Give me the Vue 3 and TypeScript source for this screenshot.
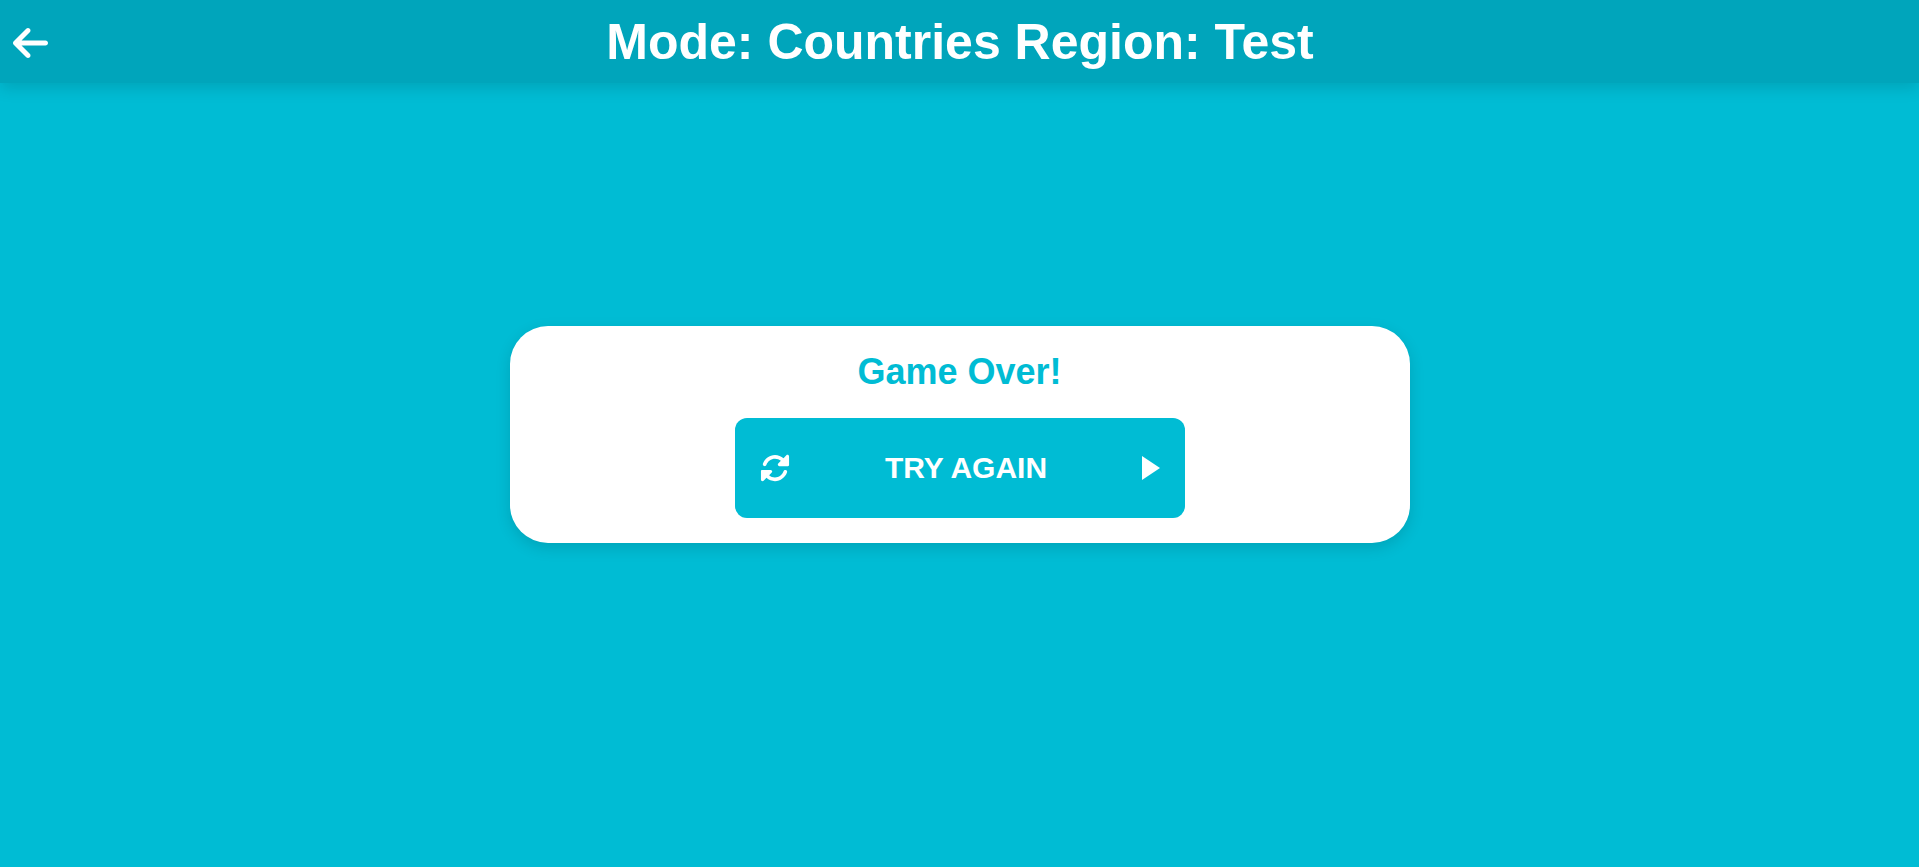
<script setup lang="ts">
import { ref } from 'vue'

const mode = ref<string>('Countries')
const region = ref<string>('Test')
</script>

<template>
  <div class="page">
    <header class="topbar">
      <button class="back" type="button" aria-label="Back">
        <svg viewBox="0 0 448 512" aria-hidden="true">
          <path d="M9.4 233.4c-12.5 12.5-12.5 32.8 0 45.3l160 160c12.5 12.5 32.8 12.5 45.3 0s12.5-32.8 0-45.3L109.2 288H416c17.7 0 32-14.3 32-32s-14.3-32-32-32H109.3L214.6 118.6c12.5-12.5 12.5-32.8 0-45.3s-32.8-12.5-45.3 0l-160 160z" />
        </svg>
      </button>
      <h1 class="title">Mode: {{ mode }} Region: {{ region }}</h1>
    </header>

    <main class="stage">
      <section class="card">
        <h2 class="message">Game Over!</h2>
        <button class="retry" type="button">
          <svg class="rotate" viewBox="0 0 512 512" aria-hidden="true">
            <path d="M449.9 39.96l-48.5 48.53C362.5 53.19 311.4 32 256 32C161.5 32 78.59 92.34 49.58 182.2c-5.438 16.81 3.797 34.88 20.61 40.28c16.97 5.5 34.86-3.812 40.3-20.59C130.9 138.5 189.4 96 256 96c37.96 0 73 14.18 100.2 37.8L311.1 178C295.1 194.8 306.8 223.4 330.4 224h146.9C487.7 223.7 496 215.3 496 204.9V59.04C496 34.99 466.9 22.95 449.9 39.96zM441.8 289.6c-16.94-5.438-34.88 3.812-40.3 20.59C381.1 373.5 322.6 416 256 416c-37.96 0-73-14.18-100.2-37.8L200 334C216.9 317.2 205.2 288.6 181.6 288H34.66C24.32 288.3 16 296.7 16 307.1v145.9c0 24.04 29.07 36.08 46.07 19.07l48.5-48.53C149.5 458.8 200.6 480 255.1 480c94.45 0 177.4-60.34 206.4-150.2C467.9 313 458.6 294.9 441.8 289.6z" />
          </svg>
          <span>TRY AGAIN</span>
          <svg class="play" viewBox="0 0 18 24" aria-hidden="true">
            <path d="M0 0L18 12L0 24z" />
          </svg>
        </button>
      </section>
    </main>
  </div>
</template>

<style>
body {
  margin: 0;
  background: #00bcd4;
}
</style>

<style scoped>
.page {
  min-height: 100vh;
  box-sizing: border-box;
  display: grid;
  font-family: "Liberation Sans", Arial, sans-serif;
  background: #00bcd4;
}

.topbar {
  position: fixed;
  top: 0;
  left: 0;
  right: 0;
  display: grid;
  grid-template-columns: 35px 1fr 35px;
  align-items: center;
  padding: 14px 12px 12px 13px;
  background: #00a5bb;
  box-shadow: 0 5px 15px rgba(0, 0, 0, 0.13);
}

.back {
  display: flex;
  padding: 0;
  border: 0;
  background: none;
  cursor: pointer;
}

.back svg {
  width: 35px;
  height: 40px;
}

svg {
  fill: #fff;
}

.title {
  margin: 0;
  color: #fff;
  font-size: 50px;
  line-height: 57px;
  text-align: center;
}

.stage {
  display: grid;
  place-items: center;
  padding-top: 2px;
}

.card {
  box-sizing: border-box;
  width: 900px;
  max-width: 100%;
  padding: 25px;
  display: flex;
  flex-direction: column;
  align-items: center;
  gap: 25px;
  border-radius: 38px;
  background: #fff;
  box-shadow: 0 5px 15px rgba(0, 0, 0, 0.13);
}

.message {
  margin: 0;
  color: #00bcd4;
  font-size: 36px;
  line-height: 42px;
}

.retry {
  box-sizing: border-box;
  width: 450px;
  max-width: 100%;
  height: 100px;
  padding: 0 24px 0 25px;
  display: flex;
  align-items: center;
  justify-content: space-between;
  border: 0;
  border-radius: 12px;
  background: #00bcd4;
  color: #fff;
  font-family: inherit;
  font-size: 30px;
  font-weight: bold;
  cursor: pointer;
}

.rotate {
  width: 30px;
  height: 30px;
}

.play {
  width: 18px;
  height: 24px;
}
</style>
